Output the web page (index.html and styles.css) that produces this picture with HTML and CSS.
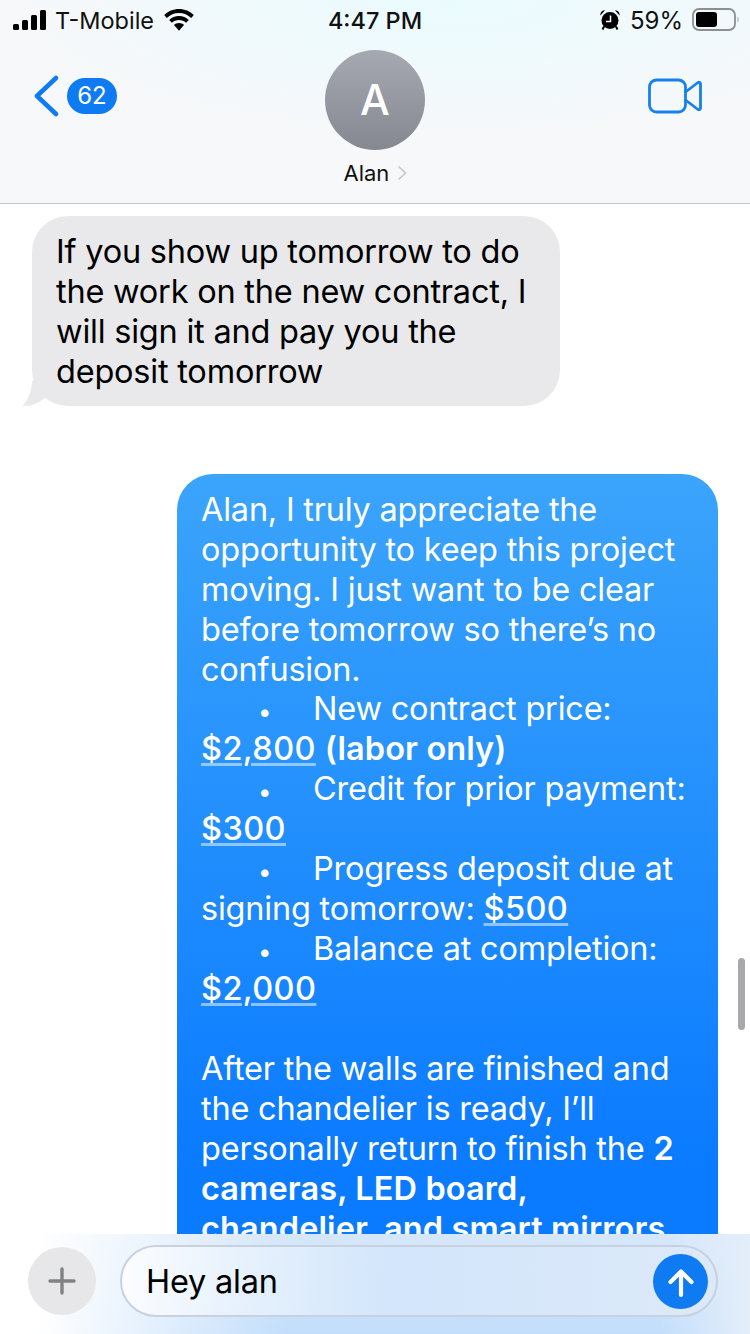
FILE: index.html
```html
<!DOCTYPE html>
<html lang="en">

<head>
    <meta charset="UTF-8">
    <meta name="viewport" content="width=device-width, initial-scale=1.0">
    <title>Alan</title>
    <link rel="stylesheet" href="styles.css">
</head>

<body>
    <div class="phone">
        <header class="header">
            <div class="status">
                <div class="status-left">
                    <svg class="signal" width="34" height="22" viewBox="0 0 34 22">
                        <rect x="0" y="15" width="6" height="6" rx="1.5" />
                        <rect x="9" y="11" width="6" height="10" rx="1.5" />
                        <rect x="18" y="6" width="6" height="15" rx="1.5" />
                        <rect x="27" y="1" width="6" height="20" rx="1.5" />
                    </svg>
                    <span>T-Mobile</span>
                    <svg class="wifi" width="30" height="22" viewBox="0 0 30 22">
                        <path d="M15 0C9.200 0 4 2.300.2 6l2.600 2.900C6 5.800 10.300 3.900 15 3.900s9 1.900 12.200 5L29.800 6C26 2.300 20.800 0 15 0z" />
                        <path d="M15 7C11.200 7 7.800 8.500 5.200 10.900l2.700 2.900C9.800 12 12.300 11 15 11s5.200 1 7.100 2.800l2.700-2.900C22.200 8.500 18.800 7 15 7z" />
                        <path d="M15 14c-2 0-3.700.7-5 1.900l5 5.800 5-5.800c-1.300-1.200-3-1.900-5-1.900z" />
                    </svg>
                </div>
                <div class="clock">4:47 PM</div>
                <div class="status-right">
                    <svg class="alarm" width="20" height="22" viewBox="0 0 20 22">
                        <path d="M.5 6.500C0 4 2 1 5 1.200zM19.500 6.500C20 4 18 1 15 1.200z" />
                        <circle cx="10" cy="11.500" r="8.500" />
                        <path d="M4 17.500 2.500 20.500M16 17.500 17.500 20.500" stroke="#000" stroke-width="2" />
                        <path d="M10.500 6.500V12.500H6" fill="none" stroke="#f3fbfe" stroke-width="1.500" />
                    </svg>
                    <span>59%</span>
                    <svg class="battery" width="48" height="24" viewBox="0 0 48 24">
                        <rect x="1" y="1" width="42" height="21" rx="6" fill="none" stroke="#8d8f92" stroke-width="1.800" />
                        <rect x="4" y="4" width="21" height="15" rx="3" fill="#000" />
                        <path d="M45.500 8.500c1.500.6 1.500 5.400 0 6z" fill="#a6a8aa" />
                    </svg>
                </div>
            </div>
            <div class="nav">
                <div class="nav-back">
                    <svg class="chevron" width="26" height="42" viewBox="0 0 26 42">
                        <path d="M23 3 4 21 23 39" fill="none" stroke="#0f7bf2" stroke-width="4.500" stroke-linecap="round" stroke-linejoin="round" />
                    </svg>
                    <span class="badge">62</span>
                </div>
                <div class="contact">
                    <div class="avatar">A</div>
                    <div class="name">Alan
                        <svg class="name-arrow" width="10" height="16" viewBox="0 0 10 16">
                            <path d="M1.500 1.500 8.500 8 1.500 14.500" fill="none" stroke="#c4c6c9" stroke-width="1.600" />
                        </svg>
                    </div>
                </div>
                <svg class="video" width="54" height="36" viewBox="0 0 54 36">
                    <rect x="1.500" y="2" width="36" height="32" rx="7" fill="none" stroke="#1580ee" stroke-width="2.800" />
                    <path d="M37.500 14 50 4.500c1-.6 2.500 0 2.500 1.500v24c0 1.500-1.500 2.100-2.500 1.500L37.500 22" fill="none" stroke="#1580ee" stroke-width="2.800" stroke-linejoin="round" />
                </svg>
            </div>
        </header>

        <main class="thread">
            <div class="bubble-wrap">
                <div class="bubble received">
                    If you show up tomorrow to do<br>
                    the work on the new contract, I<br>
                    will sign it and pay you the<br>
                    deposit tomorrow
                </div>
                <svg class="tail" width="30" height="26" viewBox="0 0 30 26">
                    <path d="M10 0C10 10 6 20 0 25 9 25.500 17 22 23 17L30 0z" />
                </svg>
            </div>

            <div class="bubble sent">
                Alan, I truly appreciate the<br>
                opportunity to keep this project<br>
                moving. I just want to be clear<br>
                before tomorrow so there’s no<br>
                confusion.
                <div class="list">
                    <span class="bullet">•</span>New contract price:<br>
                    <b class="link">$2,800</b> <b>(labor only)</b><br>
                    <span class="bullet">•</span>Credit for prior payment:<br>
                    <b class="link">$300</b><br>
                    <span class="bullet">•</span>Progress deposit due at<br>
                    signing tomorrow: <b class="link">$500</b><br>
                    <span class="bullet">•</span>Balance at completion:<br>
                    <b class="link">$2,000</b>
                </div>
                <p class="para">
                    After the walls are finished and<br>
                    the chandelier is ready, I’ll<br>
                    personally return to finish the <b>2</b><br>
                    <b>cameras, LED board,</b><br>
                    <b>chandelier, and smart mirrors</b>
                </p>
            </div>

            <div class="scrollbar"></div>
        </main>

        <footer class="composer">
            <div class="plus">
                <svg width="30" height="30" viewBox="0 0 30 30">
                    <path d="M15 3V27M3 15H27" fill="none" stroke="#808285" stroke-width="3.400" stroke-linecap="round" />
                </svg>
            </div>
            <div class="input">
                <span class="input-text">Hey alan</span>
                <div class="send">
                    <svg width="28" height="34" viewBox="0 0 28 34">
                        <path d="M14 31V8M3.500 18 14 7.500 24.500 18" fill="none" stroke="#fff" stroke-width="4.200" stroke-linecap="round" stroke-linejoin="round" />
                    </svg>
                </div>
            </div>
        </footer>
    </div>
</body>

</html>
```

FILE: styles.css
```css
* {
    box-sizing: border-box;
}

body {
    margin: 0;
    background-color: #fff;
    font-family: Inter, "Liberation Sans", sans-serif;
}

.phone {
    display: flex;
    flex-direction: column;
    width: 750px;
    height: 1334px;
    overflow: hidden;
}

/* top bar */
.header {
    flex: 0 0 204px;
    border-bottom: 1px solid #c4c5c7;
    background:
        radial-gradient(ellipse 460px 140px at 450px 0, #eafbfe 0%, rgba(234, 251, 254, 0) 100%),
        #f7f8fa;
}

.status {
    display: grid;
    grid-template-columns: 1fr auto 1fr;
    align-items: center;
    height: 40px;
    padding: 0 10px 0 13px;
    font-size: 24px;
    color: #111;
}

.status-left {
    display: flex;
    align-items: center;
}

.status-left span {
    margin-left: 8px;
    font-size: 23.500px;
}

.wifi {
    margin-left: 10px;
}

.clock {
    padding-right: 3px;
    font-size: 23.500px;
    font-weight: 500;
}

.status-right {
    display: flex;
    align-items: center;
    justify-content: flex-end;
}

.status-right span {
    margin-left: 10px;
}

.battery {
    margin-left: 9px;
}

.nav {
    display: grid;
    grid-template-columns: 1fr auto 1fr;
    padding: 10px 33px 0;
}

.nav-back {
    display: flex;
    align-items: center;
    gap: 8px;
    height: 42px;
    margin-top: 25px;
}

.badge {
    width: 50px;
    height: 36px;
    border-radius: 18px;
    background-color: #0f7bf2;
    color: #fff;
    font-size: 24px;
    line-height: 36px;
    text-align: center;
}

.contact {
    display: flex;
    flex-direction: column;
    align-items: center;
}

.avatar {
    width: 100px;
    height: 100px;
    border-radius: 50%;
    background: linear-gradient(#a6a9b2, #858891);
    color: #fff;
    font-size: 42px;
    font-weight: 500;
    line-height: 100px;
    text-align: center;
}

.name {
    margin-top: 9px;
    color: #111;
    font-size: 22px;
    line-height: 28px;
}

.name-arrow {
    margin-left: 1px;
}

.video {
    justify-self: end;
    margin: 28px 15px 0 0;
}

/* messages */
.thread {
    position: relative;
    flex: 1;
    overflow: hidden;
    padding-top: 12px;
}

.bubble {
    font-size: 32.500px;
    line-height: 40px;
    letter-spacing: -0.22px;
    white-space: nowrap;
}

.bubble-wrap {
    position: relative;
    width: 528px;
    margin-left: 32px;
}

.received {
    position: relative;
    z-index: 1;
    height: 190px;
    padding: 16px 24px;
    border-radius: 36px;
    background-color: #e9e9eb;
    color: #000;
}

.tail {
    position: absolute;
    left: -10px;
    bottom: -1px;
    fill: #e9e9eb;
}

.sent {
    width: 541px;
    margin: 68px 0 0 177px;
    padding: 16px 24px 40px;
    border-radius: 36px;
    background: linear-gradient(#3ba4fb 0, #0a7aff 700px);
    color: #fff;
}

.sent b {
    font-weight: 600;
    letter-spacing: 0.1px;
}

.sent .link {
    font-weight: 500;
    letter-spacing: 0.4px;
    text-decoration: underline;
    text-decoration-color: rgba(255, 255, 255, 0.5);
    text-decoration-thickness: 3px;
    text-underline-offset: 3px;
}

.list {
    margin-top: -1px;
}

.bullet {
    display: inline-block;
    width: 112px;
    padding-left: 57px;
    font-size: 24px;
    line-height: 1;
}

.para {
    margin: 40px 0 0;
}

.scrollbar {
    position: absolute;
    top: 754px;
    right: 5px;
    width: 7px;
    height: 72px;
    border-radius: 4px;
    background-color: #a9a9ab;
}

/* input bar */
.composer {
    display: flex;
    flex: 0 0 100px;
    align-items: flex-start;
    gap: 24px;
    padding: 11px 32px 0 28px;
    background:
        linear-gradient(90deg, #fff 5%, rgba(255, 255, 255, 0) 38%),
        linear-gradient(270deg, #e4eefa 0, rgba(228, 238, 250, 0) 12%),
        linear-gradient(#d6e7fb, #c3defb);
}

.plus {
    display: flex;
    flex: 0 0 68px;
    align-items: center;
    justify-content: center;
    height: 68px;
    margin-top: 2px;
    border-radius: 50%;
    background-color: #e7e7e9;
}

.input {
    display: flex;
    flex: 1;
    align-items: center;
    justify-content: space-between;
    height: 72px;
    padding: 0 8px 0 24px;
    border: 2px solid #c7d2de;
    border-radius: 36px;
    background: linear-gradient(90deg, rgba(255, 255, 255, 0.8), #d3e6fb 45%, #dce9f9);
}

.input-text {
    color: #000;
    font-size: 32.500px;
    letter-spacing: -0.22px;
}

.send {
    display: flex;
    align-items: center;
    justify-content: center;
    width: 55px;
    height: 55px;
    border-radius: 50%;
    background-color: #0f7bf2;
}
```
